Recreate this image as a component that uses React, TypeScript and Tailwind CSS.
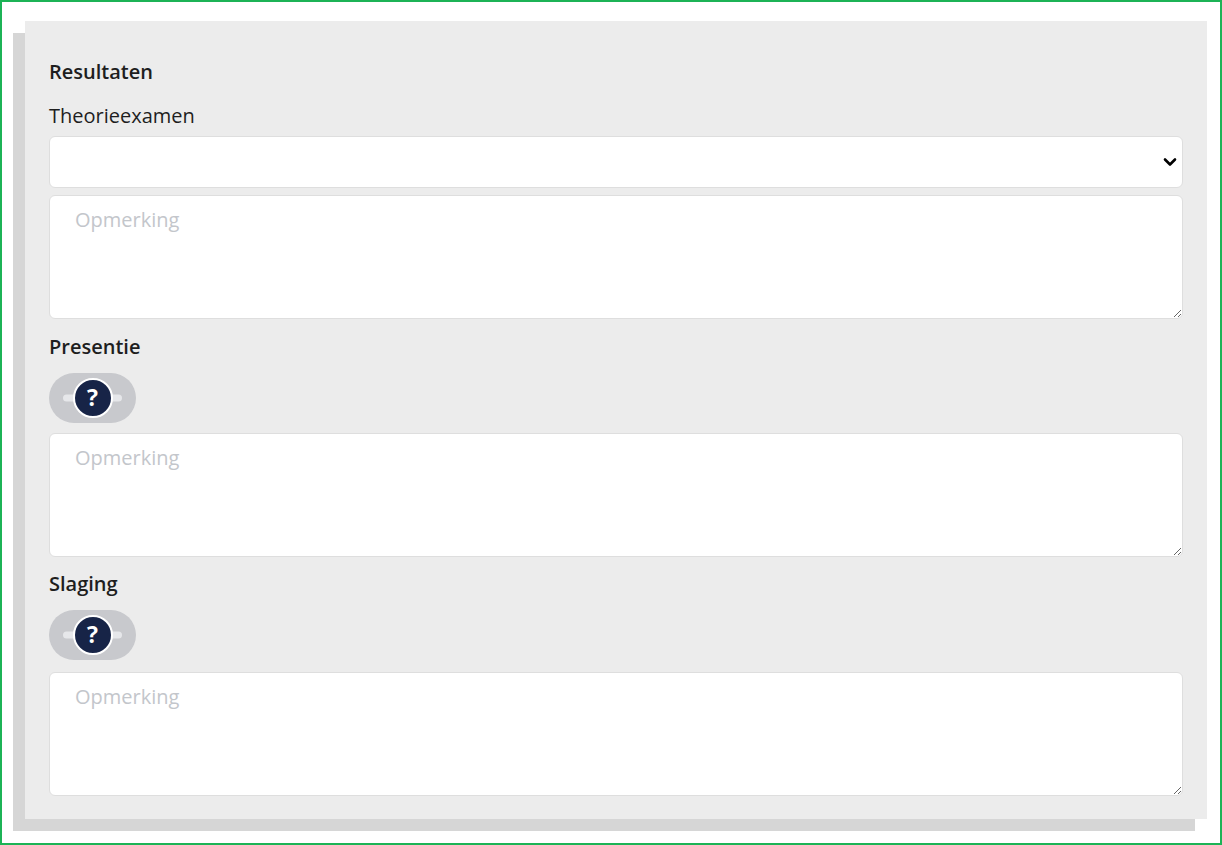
import React from "react";

function Toggle() {
  return (
    <div className="relative flex h-[50px] w-[87px] items-center justify-center rounded-full bg-[#c8c9cd]">
      <div className="absolute left-[14px] right-[14px] top-1/2 h-[7px] -translate-y-1/2 rounded-full bg-[#e6e7ea]" />
      <div className="relative flex h-[40px] w-[40px] items-center justify-center rounded-full border-2 border-white bg-[#172447] pb-[1px] text-[23px] font-bold leading-none text-white">
        ?
      </div>
    </div>
  );
}

function Remark() {
  return (
    <textarea
      placeholder="Opmerking"
      className="block h-[124px] w-full resize-y rounded-[6px] border border-[#dedede] bg-white px-[25px] pb-[10px] pt-[11px] text-[20px] leading-[26px] text-[#222] outline-none placeholder:text-[#c3c6cb]"
    />
  );
}

export default function App() {
  return (
    <div
      className="h-[845px] w-[1222px] border-2 border-[#1cb356] bg-white"
      style={{ fontFamily: '"Open Sans", "Noto Sans", sans-serif' }}
    >
      <div className="ml-[23px] mt-[19px] h-[798px] w-[1182px] bg-[#ececec] px-[24px] pt-[39px] shadow-[-12px_12px_0_#d6d6d6]">
        <div className="text-[20px] font-semibold leading-[24px] text-[#1e1e1e]">Resultaten</div>
        <div className="mt-[20px] text-[20px] leading-[24px] text-[#1e1e1e]">Theorieexamen</div>
        <div className="relative mt-[8px]">
          <select className="block h-[52px] w-full appearance-none rounded-[6px] border border-[#dedede] bg-white px-[25px] text-[20px] outline-none">
            <option></option>
          </select>
          <svg
            className="pointer-events-none absolute right-[6px] top-1/2 -translate-y-1/2"
            width="14"
            height="10"
            viewBox="0 0 14 10"
          >
            <path d="M2 2.5 L7 7.5 L12 2.5" fill="none" stroke="#000" strokeWidth="2.6" strokeLinecap="round" strokeLinejoin="round" />
          </svg>
        </div>
        <div className="mt-[7px]">
          <Remark />
        </div>
        <div className="mt-[16px] text-[20px] font-semibold leading-[24px] text-[#1e1e1e]">Presentie</div>
        <div className="mt-[14px]">
          <Toggle />
        </div>
        <div className="mt-[10px]">
          <Remark />
        </div>
        <div className="mt-[15px] text-[20px] font-semibold leading-[24px] text-[#1e1e1e]">Slaging</div>
        <div className="mt-[14px]">
          <Toggle />
        </div>
        <div className="mt-[12px]">
          <Remark />
        </div>
      </div>
    </div>
  );
}
